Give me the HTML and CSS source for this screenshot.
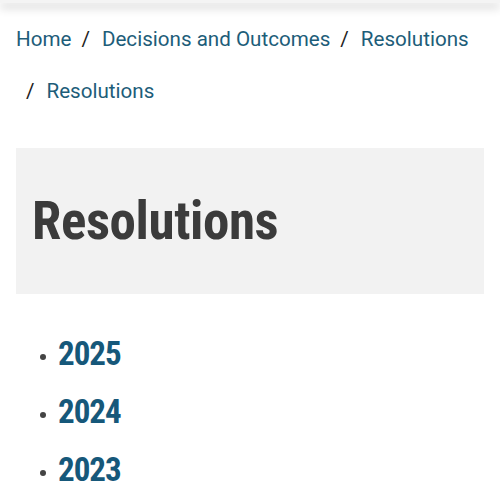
FILE: index.html
```html
<!DOCTYPE html>
<html lang="en">

<head>
  <meta charset="UTF-8">
  <meta name="viewport" content="width=device-width, initial-scale=1.0">
  <title>Resolutions</title>
  <link rel="stylesheet" href="styles.css">
</head>

<body>
  <div class="site-header"></div>

  <main class="page">
    <nav class="breadcrumb" aria-label="Breadcrumb">
      <ol>
        <li><a href="#">Home</a></li>
        <li><a href="#">Decisions and Outcomes</a></li>
        <li><a href="#">Resolutions</a></li>
        <li><a href="#">Resolutions</a></li>
      </ol>
    </nav>

    <div class="title-box">
      <h1>Resolutions</h1>
    </div>

    <ul class="year-list">
      <li><a href="#">2025</a></li>
      <li><a href="#">2024</a></li>
      <li><a href="#">2023</a></li>
    </ul>
  </main>
</body>
</html>
```

FILE: styles.css
```css
/* Estilos de la pagina */
body {
  font-family: Roboto, "Liberation Sans", sans-serif;
  margin: 0;
  background-color: #fff;
  color: #222;
  overflow: hidden;
}

.site-header {
  height: 3px;
  background-color: #f4f4f4;
  box-shadow: 0 4px 10px rgba(0, 0, 0, 0.3);
}

.page {
  padding: 0 16px;
}

.breadcrumb ol {
  display: flex;
  flex-wrap: wrap;
  row-gap: 22px;
  list-style: none;
  margin: 21px 0 0 0;
  padding: 0;
  font-size: 20.6px;
  line-height: 30px;
}

.breadcrumb li + li::before {
  content: "/";
  color: #222;
  padding: 0 12px 0 10px;
}

.breadcrumb a {
  color: #1d5d79;
  text-decoration: none;
}

.title-box {
  background-color: #f2f2f2;
  margin-top: 42px;
  padding: 40px 16px;
}

.title-box h1 {
  margin: 0;
  font-size: 53px;
  line-height: 66px;
  font-weight: 700;
  font-stretch: condensed;
  letter-spacing: -0.4px;
  color: #3b3b3b;
}

.year-list {
  list-style: none;
  margin: 39px 0 0 0;
  padding: 0 0 0 24px;
}

.year-list li {
  display: flex;
  align-items: center;
  margin-bottom: 16px;
  font-size: 33px;
  line-height: 42px;
}

.year-list li::before {
  content: "";
  width: 6px;
  height: 6px;
  border-radius: 50%;
  background-color: #444;
  margin: 6px 12px 0 0;
}

.year-list a {
  color: #16587a;
  font-weight: 700;
  font-stretch: condensed;
  letter-spacing: -1px;
  text-decoration: none;
}
```
